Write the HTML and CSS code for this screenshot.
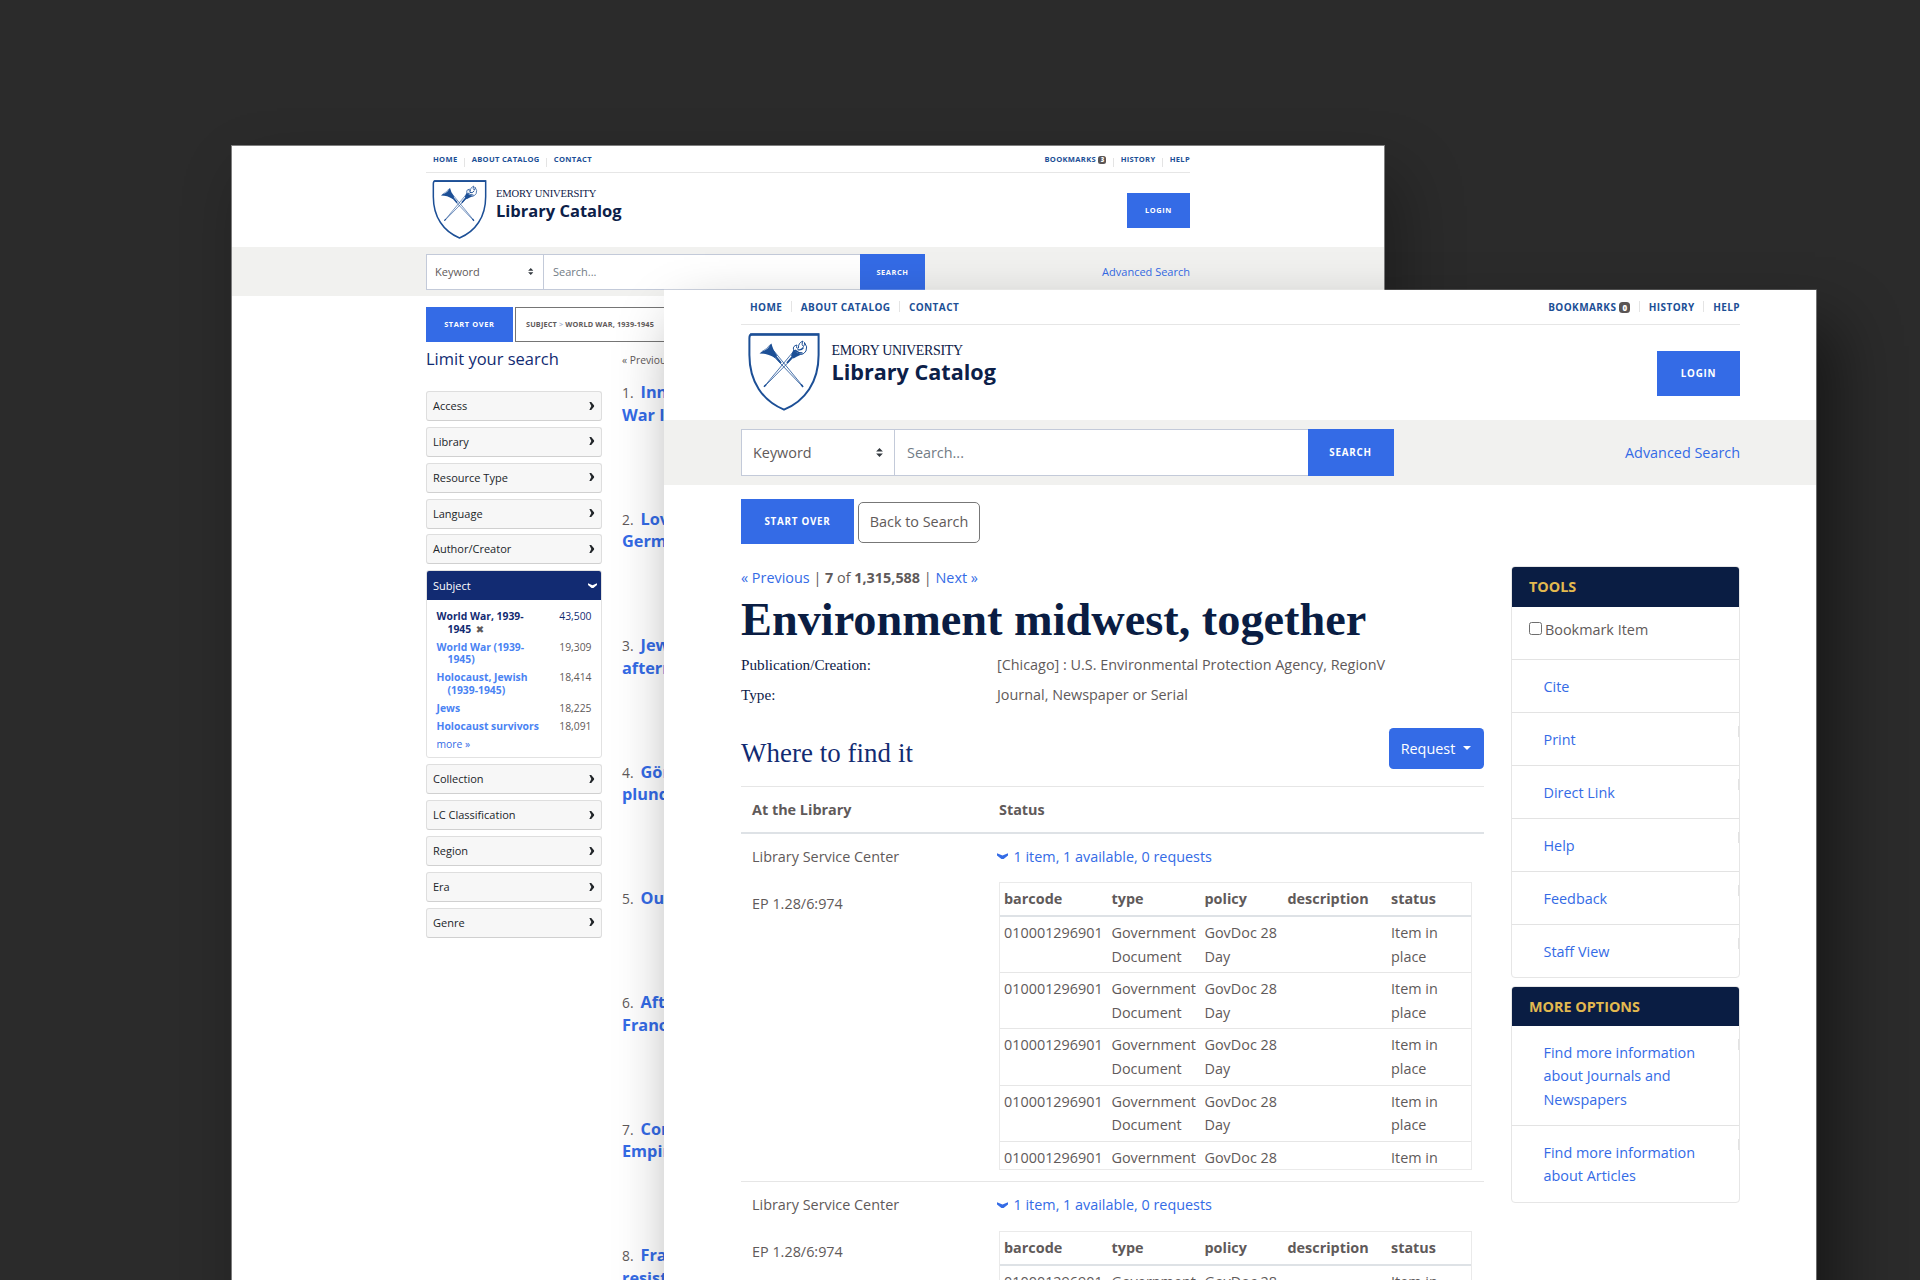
FILE: index.html
```html
<!DOCTYPE html>
<html lang="en">
<head>
<meta charset="utf-8">
<title>Library Catalog</title>
<link rel="stylesheet" href="styles.css">
</head>
<body>
<svg class="defs" aria-hidden="true">
  <symbol id="shield" viewBox="0 0 72 78">
    <path d="M4 1.2H70.6V22C70.6 49 57 68 36 76.6C15 68 1.4 49 1.4 22V5Q1.4 1.2 4 1.2Z" fill="#fff" stroke="#1c4f96" stroke-width="2"/>
    <path d="M2 1.6H71" stroke="#1c4f96" stroke-width="2.4"/>
    <g fill="none" stroke="#1c4f96">
      <path d="M22 19.5L54.5 53.5M25.5 17.5L54.8 53.2" stroke-width=".8"/>
      <path d="M50 19.5L16.500 53.500M46 17.800L16.500 53.200" stroke-width=".8"/>
      <path d="M24 19L33 30M48 19.500L39 30" stroke-width="1.900"/>
      <path d="M16 53.800L18 51.800M53.200 51.500L55 54" stroke-width="1.600"/>
    </g>
    <path d="M11.500 20.500L23.500 10.500Q24.500 16 29 22.500L27 25Q20 20.500 11.500 20.500Z" fill="#1c4f96"/>
    <path d="M14 18.500Q14.500 13 22 11.800Q20.500 16.500 14 18.500Z" fill="#fff"/>
    <path d="M14 18.500Q19 16 22 11.800" fill="none" stroke="#1c4f96" stroke-width=".6"/>
    <path d="M43 22.500L45.500 16.500Q50 22 55.500 20.500L49 23.500L45.500 25.500Z" fill="#1c4f96"/>
    <path d="M45.500 16.500Q44.500 13 49 12Q47.500 16 50.500 15Q50 10 55 8Q53 12 55.500 13.500Q57 11 56.500 9.500Q60 14 58 18Q56 21 53.500 21.500Q49 21 45.500 16.500Z" fill="#fff" stroke="#1c4f96" stroke-width="1"/>
    <path d="M47 17Q50 20 54.500 20M49.500 16.500Q53 18 55.500 14.500" fill="none" stroke="#1c4f96" stroke-width="1.300"/>
  </symbol>
  <symbol id="updown" viewBox="0 0 6 8"><path d="M3 0L6 3.200H0ZM3 8L0 4.800H6Z" fill="#343a40"/></symbol>
  <symbol id="right" viewBox="0 0 6 9"><path d="M.3 0H2.400L5.700 3.800V5L2.400 9H.3L2.500 4.500Z" fill="#212529"/></symbol>
  <symbol id="down" viewBox="0 0 11 6"><path d="M0 .2L5.500 2.600L11 .2V2.400L6.600 6H4.400L0 2.400Z" fill="currentColor"/></symbol>
</svg>

<main class="desktop">
  <section class="window back">
    <div class="container">
      <nav class="topnav">
        <a>HOME</a><i></i><a>ABOUT CATALOG</a><i></i><a>CONTACT</a>
        <span class="push"></span>
        <a>BOOKMARKS</a><b class="badge">3</b><i></i><a>HISTORY</a><i></i><a>HELP</a>
      </nav>
      <header class="brand">
        <svg class="shield"><use href="#shield"/></svg>
        <div class="names"><span class="univ">EMORY UNIVERSITY</span><span class="lib">Library Catalog</span></div>
        <button class="btn login">LOGIN</button>
      </header>
    </div>
    <div class="band">
      <div class="container searchbar">
        <div class="select">Keyword<svg class="updown"><use href="#updown"/></svg></div>
        <div class="query">Search...</div>
        <button class="btn go">SEARCH</button>
        <a class="adv">Advanced Search</a>
      </div>
    </div>
    <div class="container">
      <div class="actions">
        <button class="btn start">START OVER</button>
        <div class="constraint">SUBJECT <em>&gt;</em> WORLD WAR, 1939-1945</div>
      </div>
      <div class="split">
        <aside class="facets">
          <h2>Limit your search</h2>
          <div class="facet">Access<svg><use href="#right"/></svg></div>
          <div class="facet">Library<svg><use href="#right"/></svg></div>
          <div class="facet">Resource Type<svg><use href="#right"/></svg></div>
          <div class="facet">Language<svg><use href="#right"/></svg></div>
          <div class="facet">Author/Creator<svg><use href="#right"/></svg></div>
          <div class="open">
            <div class="openhead">Subject<svg><use href="#down"/></svg></div>
            <ul>
              <li class="on"><b>World War, 1939-<br>1945 <s>✖</s></b><span>43,500</span></li>
              <li><b>World War (1939-<br>1945)</b><span>19,309</span></li>
              <li><b>Holocaust, Jewish<br>(1939-1945)</b><span>18,414</span></li>
              <li><b>Jews</b><span>18,225</span></li>
              <li><b>Holocaust survivors</b><span>18,091</span></li>
              <li class="more">more »</li>
            </ul>
          </div>
          <div class="facet">Collection<svg><use href="#right"/></svg></div>
          <div class="facet">LC Classification<svg><use href="#right"/></svg></div>
          <div class="facet">Region<svg><use href="#right"/></svg></div>
          <div class="facet">Era<svg><use href="#right"/></svg></div>
          <div class="facet">Genre<svg><use href="#right"/></svg></div>
        </aside>
        <div class="results">
          <p class="prev">« Previou</p>
          <p class="hit"><span>1.</span>Inn<br>War I</p>
          <p class="hit"><span>2.</span>Lov<br>Germ</p>
          <p class="hit"><span>3.</span>Jew<br>afterm</p>
          <p class="hit"><span>4.</span>Göri<br>plund</p>
          <p class="hit one"><span>5.</span>Ou</p>
          <p class="hit"><span>6.</span>Aft<br>Franc</p>
          <p class="hit"><span>7.</span>Con<br>Empir</p>
          <p class="hit"><span>8.</span>Fra<br>resist</p>
        </div>
      </div>
    </div>
  </section>

  <section class="window front">
    <div class="container">
      <nav class="topnav">
        <a>HOME</a><i></i><a>ABOUT CATALOG</a><i></i><a>CONTACT</a>
        <span class="push"></span>
        <a>BOOKMARKS</a><b class="badge">0</b><i></i><a>HISTORY</a><i></i><a>HELP</a>
      </nav>
      <header class="brand">
        <svg class="shield"><use href="#shield"/></svg>
        <div class="names"><span class="univ">EMORY UNIVERSITY</span><span class="lib">Library Catalog</span></div>
        <button class="btn login">LOGIN</button>
      </header>
    </div>
    <div class="band">
      <div class="container searchbar">
        <div class="select">Keyword<svg class="updown"><use href="#updown"/></svg></div>
        <div class="query">Search...</div>
        <button class="btn go">SEARCH</button>
        <a class="adv">Advanced Search</a>
      </div>
    </div>
    <div class="container">
      <div class="actions">
        <button class="btn start">START OVER</button>
        <button class="backto">Back to Search</button>
      </div>
      <div class="split">
        <div class="record">
          <p class="pager"><a>« Previous</a> | <b>7</b> of <b>1,315,588</b> | <a>Next »</a></p>
          <h1>Environment midwest, together</h1>
          <dl>
            <dt>Publication/Creation:</dt><dd>[Chicago] : U.S. Environmental Protection Agency, RegionV</dd>
            <dt>Type:</dt><dd>Journal, Newspaper or Serial</dd>
          </dl>
          <div class="where"><h2>Where to find it</h2><button class="request">Request<span></span></button></div>
          <div class="holdhead"><b>At the Library</b><b>Status</b></div>
          <div class="holding">
            <div class="loc">Library Service Center<br><br>EP 1.28/6:974</div>
            <div class="stat">
              <a class="toggle"><svg><use href="#down"/></svg>1 item, 1 available, 0 requests</a>
              <div class="items">
                <div class="row head"><span>barcode</span><span>type</span><span>policy</span><span>description</span><span>status</span></div>
                <div class="row"><span>010001296901</span><span>Government Document</span><span>GovDoc 28 Day</span><span></span><span>Item in place</span></div>
                <div class="row"><span>010001296901</span><span>Government Document</span><span>GovDoc 28 Day</span><span></span><span>Item in place</span></div>
                <div class="row"><span>010001296901</span><span>Government Document</span><span>GovDoc 28 Day</span><span></span><span>Item in place</span></div>
                <div class="row"><span>010001296901</span><span>Government Document</span><span>GovDoc 28 Day</span><span></span><span>Item in place</span></div>
                <div class="row"><span>010001296901</span><span>Government</span><span>GovDoc 28</span><span></span><span>Item in</span></div>
              </div>
            </div>
          </div>
          <div class="holding">
            <div class="loc">Library Service Center<br><br>EP 1.28/6:974</div>
            <div class="stat">
              <a class="toggle"><svg><use href="#down"/></svg>1 item, 1 available, 0 requests</a>
              <div class="items">
                <div class="row head"><span>barcode</span><span>type</span><span>policy</span><span>description</span><span>status</span></div>
                <div class="row"><span>010001296901</span><span>Government</span><span>GovDoc 28</span><span></span><span>Item in</span></div>
              </div>
            </div>
          </div>
        </div>
        <aside class="side">
          <div class="card">
            <h3>TOOLS</h3>
            <div class="mark"><span class="box"></span>Bookmark Item</div>
            <a>Cite</a><a class="tick">Print</a><a class="tick">Direct Link</a><a class="tick">Help</a><a class="tick">Feedback</a><a class="tick">Staff View</a>
          </div>
          <div class="card options">
            <h3>MORE OPTIONS</h3>
            <a class="tick">Find more information about Journals and Newspapers</a>
            <a class="tick">Find more information about Articles</a>
          </div>
        </aside>
      </div>
    </div>
  </section>
</main>
</body>
</html>
```
FILE: styles.css
```css
* { box-sizing: border-box; }
body { margin: 0; background: #2b2b2b; font-family: "Open Sans", "Noto Sans", sans-serif; color: #5f5a5a; }
h1, h2, h3, p, dl, dd, ul { margin: 0; padding: 0; }
ul { list-style: none; }
button { font-family: inherit; border: 0; padding: 0; margin: 0; }
.defs { display: none; }
svg { flex: none; display: block; }

.desktop { position: relative; width: 1920px; height: 1280px; overflow: hidden; }
.window { position: absolute; width: 1152px; background: #fff; overflow: hidden; }
.back { left: 232px; top: 146px; height: 1200px; box-shadow: 0 0 0 1px rgba(255,255,255,.4), 15px 30px 60px rgba(0,0,0,.3); }
.front { left: 664px; top: 290px; width: 1152px; height: 1100px; box-shadow: .5px 0 0 .5px rgba(255,255,255,.35), 20px 35px 60px rgba(0,0,0,.48); }

/* Shared header */
.topnav { display: flex; align-items: center; border-bottom: 1px solid #e6e6e6; color: #1c4f96; font-weight: 700; white-space: nowrap; }
.topnav i { width: 1px; background: #e4e4e4; }
.push { flex: 1; }
.badge { background: #5a5555; color: #fff; text-align: center; }
.brand { display: flex; align-items: flex-start; }
.names { display: flex; flex-direction: column; white-space: nowrap; flex: 1; color: #0c2048; }
.univ { font-family: "Liberation Serif", serif; }
.lib { font-weight: 700; }
.btn { background: #346be6; color: #fff; font-weight: 700; display: flex; align-items: center; justify-content: center; }
.band { background: #f1f1ef; }
.searchbar { display: flex; align-items: center; }
.select, .query { display: flex; align-items: center; background: #fff; border: 1px solid #c3cad9; height: 100%; }
.select { justify-content: space-between; }
.query { border-left: 0; border-right: 0; color: #727c86; }
.adv { margin-left: auto; color: #346be6; white-space: nowrap; }
.actions, .split { display: flex; align-items: flex-start; }

/* Search results window */
.back .container { width: 764px; margin-left: 194px; }
.back .topnav { height: 27px; font-size: 7.600px; letter-spacing: .3px; padding: 0 0 0 7px; }
.back .topnav i { height: 9px; margin: 6px 6.600px 0; }
.back .badge { width: 8px; height: 8px; border-radius: 2.500px; font-size: 6px; line-height: 8px; letter-spacing: 0; margin: 1px 0 0 2.500px; }
.back .brand { height: 74px; padding: 7px 0 0 6px; }
.back .shield { width: 55px; height: 59px; }
.back .names { padding: 7px 0 0 9px; }
.back .univ { font-size: 10.600px; line-height: 13px; letter-spacing: -.2px; }
.back .lib { font-size: 16.500px; line-height: 22px; }
.back .btn { font-size: 7.400px; letter-spacing: .6px; }
.back .login { width: 63px; height: 34.500px; margin-top: 13px; }
.back .band { height: 49px; padding: 7px 0; }
.back .searchbar { height: 35.500px; font-size: 11px; }
.back .select { width: 118px; padding: 0 9.500px 0 8px; }
.back .updown { width: 5.500px; height: 7px; }
.back .query { width: 316px; padding-left: 9px; }
.back .go { width: 65px; height: 35.500px; }
.back .actions { padding-top: 11px; gap: 2.500px; height: 46px; }
.back .start { width: 86.500px; height: 34.500px; }
.constraint { height: 34.500px; width: 149.500px; border: 1px solid #757575; padding-left: 10px; display: flex; align-items: center; font-size: 7.300px; font-weight: 700; letter-spacing: .15px; white-space: pre; }
.constraint em { font-style: normal; color: #a9b4d0; }
.facets { width: 175.500px; color: #212529; font-size: 11px; }
.facets h2 { font-size: 16.500px; font-weight: 400; color: #122b72; line-height: 24px; height: 49px; padding-top: 5px; white-space: nowrap; }
.facet { height: 30px; margin-bottom: 5.870px; border: 1px solid #dedede; border-bottom: 1.500px solid #d0d0d0; border-radius: 3px; background: #f7f7f7; display: flex; align-items: center; justify-content: space-between; padding: 0 6px 1px 6px; }
.facet svg { width: 5.500px; height: 8px; }
.open { border: 1px solid #e2e2e2; border-radius: 3px; height: 188px; margin-bottom: 6.200px; overflow: hidden; }
.openhead { height: 29px; padding: 0 4px 1px 6px; background: #122b72; color: #fff; display: flex; align-items: center; justify-content: space-between; }
.openhead svg { width: 9px; height: 5px; }
.open ul { padding: 10px 9px 0 9.500px; font-size: 10.350px; line-height: 12.400px; }
.open li { display: flex; justify-content: space-between; margin-bottom: 5.700px; color: #5f5a5a; white-space: nowrap; }
.open b { color: #4a83f3; padding-left: 11px; text-indent: -11px; }
.open .on, .open .on b { color: #122b72; }
.open s { text-decoration: none; color: #5f5a5a; font-size: 10px; padding-left: 2px; font-family: "DejaVu Sans", sans-serif; line-height: 1; }
.open .more { color: #346be6; }
.results { padding-left: 20.500px; width: 300px; white-space: nowrap; }
.prev { font-size: 10.300px; line-height: 16px; padding-top: 9.500px; height: 39.400px; }
.hit { font-size: 16.300px; font-weight: 700; line-height: 22.500px; height: 126.500px; color: #346be6; }
.hit.one { height: 104px; }
.hit span { margin-right: 7px; line-height: 1; font-weight: 400; font-size: 13.800px; color: #5f5a5a; }

/* Record window */
.front .container { width: 999px; margin-left: 77px; }
.front .topnav { height: 35px; font-size: 10px; letter-spacing: .42px; padding: 0 0 1px 9px; }
.front .topnav i { height: 11px; margin: 0 8.700px; }
.front .badge { width: 11px; height: 11px; border-radius: 3.500px; font-size: 8px; line-height: 11px; letter-spacing: 0; margin: 1px 0 0 3px; }
.front .brand { height: 95px; padding: 8px 0 0 6.500px; }
.front .shield { width: 72px; height: 78px; }
.front .names { padding: 8px 0 0 12px; }
.front .univ { font-size: 14px; line-height: 19px; letter-spacing: -.35px; }
.front .lib { font-size: 21.600px; line-height: 28px; margin-top: -2px; }
.front .btn { font-size: 9.800px; letter-spacing: .75px; }
.front .login { width: 83px; height: 45px; margin-top: 18px; }
.front .band { height: 65px; padding: 9px 0; }
.front .searchbar { height: 47px; font-size: 14.400px; }
.front .select { width: 154px; padding: 0 11.500px 0 11px; }
.front .updown { width: 7px; height: 9px; }
.front .query { width: 412.500px; padding-left: 12px; }
.front .go { width: 86px; height: 47px; }
.front .actions { padding-top: 14px; gap: 4px; height: 81px; }
.front .start { width: 113px; height: 45px; }
.backto { width: 122px; height: 41px; margin-top: 3px; padding-bottom: 2px; border: 1px solid #777; border-radius: 5px; background: #fff; color: #5f5a5a; font-size: 14.400px; }
.front .split { font-size: 14.400px; line-height: 23.500px; justify-content: space-between; }
.front a { color: #346be6; }
.front .topnav a { color: #1c4f96; }
.record { width: 742.500px; }
.pager { height: 24px; }
h1 { font: 700 46.300px/60px "Liberation Serif", serif; color: #0a1d43; height: 61px; white-space: nowrap; }
dl { display: grid; grid-template-columns: 256px 1fr; grid-auto-rows: 30.500px; margin-top: .5px; line-height: 26px; }
dt { font: 15.200px/26px "Liberation Serif", serif; color: #0c2048; }
.where { display: flex; justify-content: space-between; height: 73px; padding-top: 15px; }
.where h2 { font: 26.900px/36px "Liberation Serif", serif; letter-spacing: .06px; color: #122b72; padding-top: 7.500px; }
.request { width: 95px; height: 41px; border-radius: 4.500px; background: #346be6; color: #fff; font-size: 14.400px; display: flex; align-items: center; justify-content: center; gap: 8px; }
.request span { border: 4px solid transparent; border-top-color: #fff; border-bottom: 0; margin-top: -1px; }
.holdhead { display: grid; grid-template-columns: 247px 1fr; height: 48px; border-top: 1px solid #e6e6e6; border-bottom: 2px solid #dee2e6; padding: 11px 0 0 11px; }
.holding { display: grid; grid-template-columns: 256px 1fr; padding: 11px 0 11.500px 0; height: 348.500px; border-bottom: 1px solid #e6e6e6; }
.loc { padding-left: 11px; }
.toggle { display: flex; align-items: center; gap: 5.500px; }
.toggle svg { width: 11px; height: 6px; }
.items { margin: 14px 0 0 2px; width: 473px; height: 288px; border: 1px solid #eaeaea; overflow: hidden; }
.row { display: grid; grid-template-columns: 107.500px 93px 83px 103.500px 60px; padding: 4px 0 0 4px; height: 56.200px; border-bottom: 1px solid #e6e6e6; }
.head { height: 34px; border-bottom: 2px solid #dee2e6; font-weight: 700; }
.side { width: 229px; }
.card { border: 1px solid #e6e6e6; border-radius: 4px; overflow: hidden; }
.card h3 { background: #0a1d43; color: #e3b94f; font-size: 14.400px; line-height: 39px; height: 39.500px; padding-left: 17px; }
.mark { height: 52.500px; padding: 11px 0 0 17px; display: flex; align-items: flex-start; }
.box { width: 12.500px; height: 12.500px; border: 1px solid #6e6e6e; border-radius: 2.500px; margin: 4.500px 3.500px 0 0; }
.card a { display: block; border-top: 1px solid #e3e3e3; padding: 14.500px 30px 14px 31.500px; line-height: 23.500px; background: linear-gradient(#e3e3e3, #e3e3e3) no-repeat 300px 0; }
.card a.tick { background-size: 1px 11px; background-position: right 13px; }
.options { margin-top: 7.500px; }
.options h3 + a { border-top: 0; }
```
